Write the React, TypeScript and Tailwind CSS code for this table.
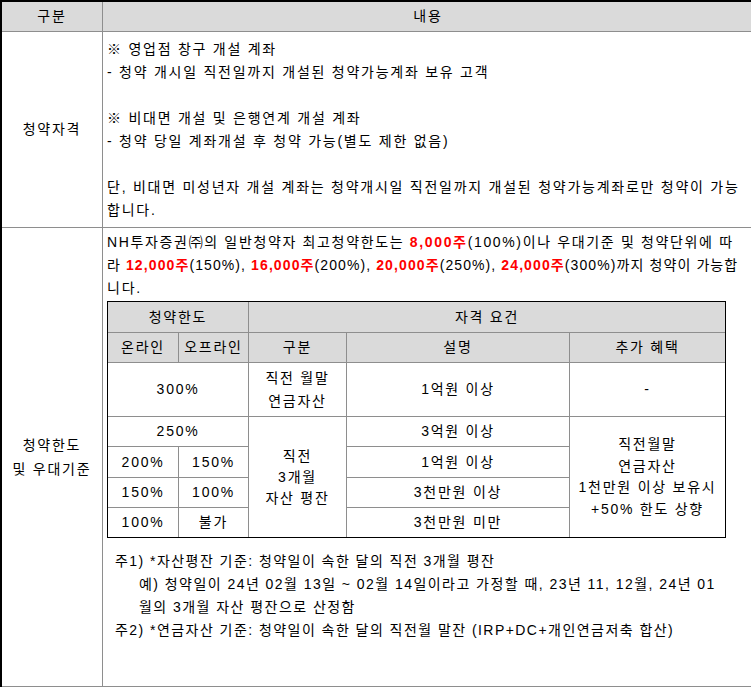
import React from "react";

const Line = ({ children, className = "" }: { children?: React.ReactNode; className?: string }) => (
  <div className={"h-[23px] leading-[23px] whitespace-nowrap " + className}>{children}</div>
);

const R = ({ children }: { children: React.ReactNode }) => (
  <span className="font-bold text-[#ff0000]">{children}</span>
);

const H = ({ children, className = "" }: { children: React.ReactNode; className?: string }) => (
  <div className={"flex items-center justify-center bg-[#dadada] text-center whitespace-nowrap " + className}>{children}</div>
);

const C = ({ children, className = "" }: { children: React.ReactNode; className?: string }) => (
  <div className={"flex items-center justify-center bg-white text-center whitespace-nowrap " + className}>{children}</div>
);

export default function App() {
  return (
    <div className="w-[751px] h-[689px] overflow-hidden bg-white text-black text-[14px] tracking-[1.75px] font-['Liberation_Sans','Noto_Sans_CJK_KR',sans-serif]">
      <div className="w-[753px] border-t-2 border-l-2 border-black">
        {/* header */}
        <div className="flex h-[30px] bg-[#dadada] border-b border-[#8e8e8e]">
          <div className="w-[101px] shrink-0 border-r border-[#8e8e8e] flex items-center justify-center">구분</div>
          <div className="flex-1 min-w-0 flex items-center justify-center">내용</div>
        </div>

        {/* row 1 */}
        <div className="flex h-[196px] border-b border-[#8e8e8e]">
          <div className="w-[101px] shrink-0 border-r border-[#8e8e8e] flex items-center justify-center">청약자격</div>
          <div className="flex-1 min-w-0 pl-[4px] pt-[6px]">
            <Line>※ 영업점 창구 개설 계좌</Line>
            <Line>- 청약 개시일 직전일까지 개설된 청약가능계좌 보유 고객</Line>
            <Line />
            <Line>※ 비대면 개설 및 은행연계 개설 계좌</Line>
            <Line>- 청약 당일 계좌개설 후 청약 가능(별도 제한 없음)</Line>
            <Line />
            <Line>단, 비대면 미성년자 개설 계좌는 청약개시일 직전일까지 개설된 청약가능계좌로만 청약이 가능</Line>
            <Line>합니다.</Line>
          </div>
        </div>

        {/* row 2 */}
        <div className="flex h-[459px] border-b border-[#8e8e8e]">
          <div className="w-[101px] shrink-0 border-r border-[#8e8e8e] flex flex-col items-center justify-center leading-[24px]">
            <div>청약한도</div>
            <div>및 우대기준</div>
          </div>
          <div className="flex-1 min-w-0 pl-[4px] pt-[3px]">
            <Line className="tracking-[1.65px]">
              NH투자증권㈜의 일반청약자 최고청약한도는 <R>8,000주</R>(100%)이나 우대기준 및 청약단위에 따
            </Line>
            <Line className="tracking-[1.1px]">
              라 <R>12,000주</R>(150%), <R>16,000주</R>(200%), <R>20,000주</R>(250%), <R>24,000주</R>(300%)까지 청약이 가능합
            </Line>
            <Line>니다.</Line>

            <div className="mt-[1px] w-[619px] grid grid-cols-[70px_69px_97px_222px_155px] grid-rows-[30px_29px_53px_29px_30px_29px_29px] gap-px bg-[#8e8e8e] border border-black">
              <H className="col-span-2">청약한도</H>
              <H className="col-span-3">자격 요건</H>
              <H>온라인</H>
              <H>오프라인</H>
              <H>구분</H>
              <H>설명</H>
              <H>추가 혜택</H>

              <C className="col-span-2">300%</C>
              <C className="flex-col leading-[23px]">
                <div>직전 월말</div>
                <div>연금자산</div>
              </C>
              <C>1억원 이상</C>
              <C>-</C>

              <C className="col-span-2">250%</C>
              <C className="row-span-4 flex-col leading-[21px]">
                <div>직전</div>
                <div>3개월</div>
                <div>자산 평잔</div>
              </C>
              <C>3억원 이상</C>
              <C className="row-span-4 flex-col leading-[21.5px]">
                <div>직전월말</div>
                <div>연금자산</div>
                <div>1천만원 이상 보유시</div>
                <div>+50% 한도 상향</div>
              </C>

              <C>200%</C>
              <C>150%</C>
              <C>1억원 이상</C>

              <C>150%</C>
              <C>100%</C>
              <C>3천만원 이상</C>

              <C>100%</C>
              <C>불가</C>
              <C>3천만원 미만</C>
            </div>

            <div className="mt-[12px] ml-[8px] tracking-[1.45px]">
              <div className="flex">
                <div className="w-[35px] shrink-0 h-[23px] leading-[23px] whitespace-nowrap">주1)</div>
                <Line>*자산평잔 기준: 청약일이 속한 달의 직전 3개월 평잔</Line>
              </div>
              <div className="ml-[24px]">
                <Line>예) 청약일이 24년 02월 13일 ~ 02월 14일이라고 가정할 때, 23년 11, 12월, 24년 01</Line>
                <Line>월의 3개월 자산 평잔으로 산정함</Line>
              </div>
              <div className="flex">
                <div className="w-[35px] shrink-0 h-[23px] leading-[23px] whitespace-nowrap">주2)</div>
                <Line>*연금자산 기준: 청약일이 속한 달의 직전월 말잔 (IRP+DC+개인연금저축 합산)</Line>
              </div>
            </div>
          </div>
        </div>
      </div>
    </div>
  );
}
